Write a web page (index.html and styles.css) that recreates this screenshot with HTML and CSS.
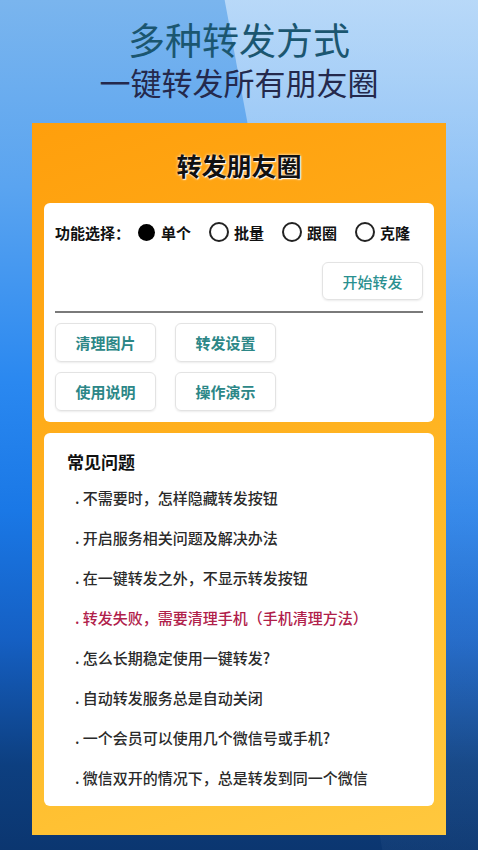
FILE: index.html
```html
<!DOCTYPE html>
<html lang="zh-CN">

<head>
  <meta charset="UTF-8" />
  <meta name="viewport" content="width=device-width, initial-scale=1.0" />
  <title>转发朋友圈</title>
  <link rel="stylesheet" href="styles.css">
</head>

<body>
  <div class="screen">
    <!-- 顶部宣传标题 -->
    <div class="hero">
      <div class="hero_main">多种转发方式</div>
      <div class="hero_sub">一键转发所有朋友圈</div>
    </div>
    <!-- 橙色面板 -->
    <div class="panel">
      <div class="panel_title">转发朋友圈</div>
      <!-- 功能选择 -->
      <div class="card card_func">
        <div class="mode_row">
          <span class="mode_label">功能选择：</span>
          <span class="mode_opt"><i class="radio checked"></i>单个</span>
          <span class="mode_opt"><i class="radio"></i>批量</span>
          <span class="mode_opt"><i class="radio"></i>跟圈</span>
          <span class="mode_opt"><i class="radio"></i>克隆</span>
        </div>
        <div class="start_row">
          <div class="btn btn_start">开始转发</div>
        </div>
        <div class="divider"></div>
        <div class="btn_grid">
          <div class="btn">清理图片</div>
          <div class="btn">转发设置</div>
          <div class="btn">使用说明</div>
          <div class="btn">操作演示</div>
        </div>
      </div>
      <!-- 常见问题 -->
      <div class="card card_faq">
        <div class="faq_title">常见问题</div>
        <ul class="faq_list">
          <li>. 不需要时，怎样隐藏转发按钮</li>
          <li>. 开启服务相关问题及解决办法</li>
          <li>. 在一键转发之外，不显示转发按钮</li>
          <li class="hot">. 转发失败，需要清理手机（手机清理方法）</li>
          <li>. 怎么长期稳定使用一键转发?</li>
          <li>. 自动转发服务总是自动关闭</li>
          <li>. 一个会员可以使用几个微信号或手机?</li>
          <li>. 微信双开的情况下，总是转发到同一个微信</li>
        </ul>
      </div>
    </div>
  </div>
</body>

</html>
```

FILE: styles.css
```css
body,
ul,
li {
  margin: 0px;
  padding: 0px;
}

body {
  font-family: "Noto Sans CJK SC", "Noto Sans", sans-serif;
}

.screen {
  width: 478px;
  height: 850px;
  position: relative;
  overflow: hidden;
  background: linear-gradient(180deg, #7ab5ee 0%, #5aa4f0 22%, #2a88f0 45%, #1a78e6 60%, #1560c4 75%, #0d3f80 90%, #0b3670 100%);
}

/* 右上角的浅色斜面 */
.screen::before {
  content: "";
  position: absolute;
  left: 0;
  top: 0;
  width: 100%;
  height: 100%;
  background: linear-gradient(180deg, rgba(225, 240, 255, 0.6) 0%, rgba(210, 232, 255, 0.3) 35%, rgba(190, 220, 255, 0.12) 70%, rgba(190, 220, 255, 0.04) 100%);
  clip-path: polygon(47% 0, 100% 0, 100% 100%, 80% 100%);
}

.hero {
  position: relative;
  text-align: center;
  padding-top: 17px;
  height: 107px;
  box-sizing: border-box;
}

.hero_main {
  font-size: 37px;
  line-height: 44px;
  color: #1b5670;
  font-weight: 400;
}

.hero_sub {
  margin-top: 2px;
  font-size: 31px;
  line-height: 38px;
  color: #24294c;
  font-weight: 400;
}

.panel {
  position: relative;
  margin: 16px 0 0 32px;
  width: 414px;
  height: 712px;
  box-sizing: border-box;
  padding: 0 12px;
  background: linear-gradient(160deg, #ff9f0c 0%, #ffac1a 35%, #ffba28 65%, #ffc83e 100%);
}

.panel_title {
  padding-top: 28px;
  height: 80px;
  box-sizing: border-box;
  line-height: 28px;
  text-align: center;
  font-size: 25px;
  font-weight: bold;
  color: #111;
  text-shadow: 0 0 3px #fff, 1px 1px 1px #fff;
}

.card {
  background-color: #fff;
  border-radius: 6px;
}

.card_func {
  height: 219px;
  box-sizing: border-box;
  padding: 17px 11px 11px;
}

.mode_row {
  display: flex;
  align-items: center;
  height: 24px;
  font-size: 15px;
  font-weight: bold;
  color: #111;
}

.mode_label {
  width: 83px;
}

.mode_opt {
  display: flex;
  align-items: center;
  gap: 5px;
  margin-right: 18px;
}

.mode_opt:last-child {
  margin-right: 0;
}

.radio {
  width: 16px;
  height: 16px;
  border: 2px solid #222;
  border-radius: 50%;
}

.radio.checked {
  width: 17px;
  height: 17px;
  border: 0;
  margin-right: 1px;
  background-color: #000;
}

.start_row {
  display: flex;
  justify-content: flex-end;
  margin-top: 18px;
}

.btn {
  width: 101px;
  height: 39px;
  box-sizing: border-box;
  border: 1px solid #e3e3e3;
  border-radius: 6px;
  box-shadow: 0 1px 2px rgba(0, 0, 0, 0.08);
  display: flex;
  align-items: center;
  justify-content: center;
  font-size: 15px;
  font-weight: bold;
  color: #2c8787;
}

.btn_start {
  height: 38px;
  font-weight: 500;
  color: #2a9090;
}

.divider {
  margin-top: 11px;
  height: 2px;
  background-color: #7a7a7a;
}

.btn_grid {
  display: grid;
  grid-template-columns: 101px 101px;
  gap: 10px 19px;
  margin-top: 10px;
}

.card_faq {
  margin-top: 11px;
  height: 373px;
  box-sizing: border-box;
  padding: 17px 12px 8px 23px;
}

.faq_title {
  font-size: 17px;
  line-height: 24px;
  font-weight: bold;
  color: #111;
}

.faq_list {
  list-style: none;
  margin-top: 4px;
  padding-left: 8px;
}

.faq_list li {
  font-size: 15px;
  line-height: 40px;
  font-weight: 500;
  color: #2a2a2a;
  white-space: nowrap;
}

.faq_list .hot {
  color: #b0204a;
}
```
